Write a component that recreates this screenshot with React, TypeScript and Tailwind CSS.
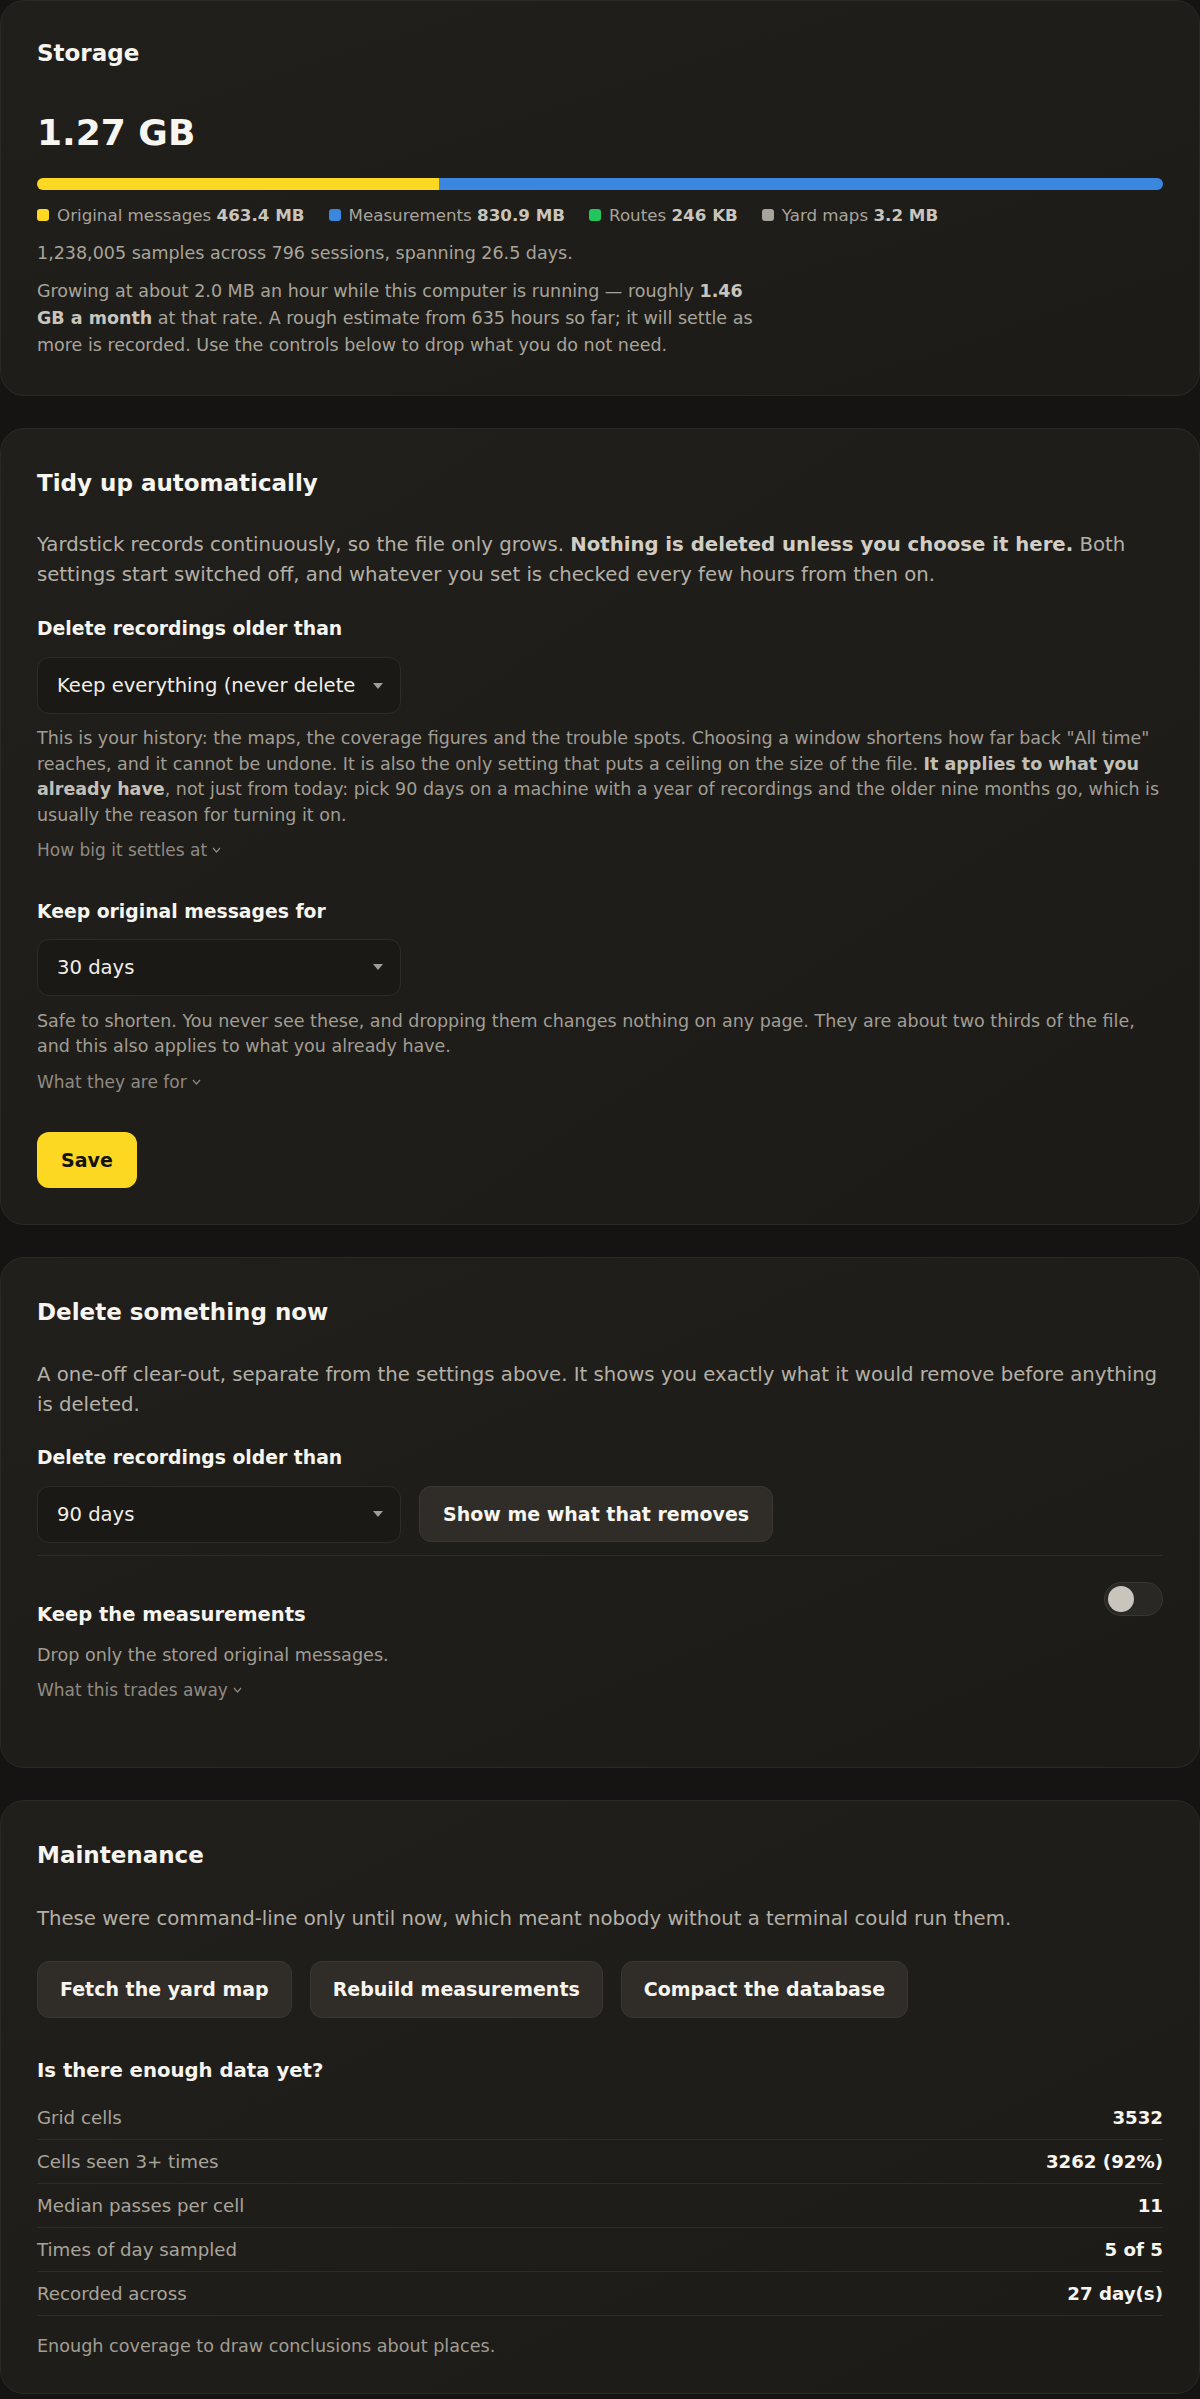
import React from 'react'

const font = { fontFamily: '"DejaVu Sans", Verdana, sans-serif' }

function Chevron() {
  return (
    <svg width="9" height="6" viewBox="0 0 9 6" className="ml-[5px] inline-block" aria-hidden>
      <path d="M1 1l3.5 4L8 1" fill="none" stroke="currentColor" strokeWidth="1.2" />
    </svg>
  )
}

function Select({ value }: { value: string }) {
  return (
    <div className="flex h-[57px] w-[364px] items-center justify-between rounded-xl border border-[#2e2c28] bg-[#1a1916] pl-[19px] pr-[16px]">
      <span className="w-[300px] overflow-hidden whitespace-nowrap text-[19.6px] text-[#f1eee8]">{value}</span>
      <svg width="12" height="8" viewBox="0 0 12 8" className="ml-2 shrink-0">
        <polygon points="1,1 11,1 6,7" fill="#a19d95" />
      </svg>
    </div>
  )
}

function Card({ children }: { children: React.ReactNode }) {
  return (
    <section className="rounded-[24px] border border-[#2b2925] bg-gradient-to-br from-[#211f1b] via-[#1f1d19] to-[#1d1b18] p-9">
      {children}
    </section>
  )
}

function Toggle() {
  return (
    <div className="flex h-[34px] w-[59px] items-center rounded-full border border-[#3a3732] bg-[#2a2824] px-[3px]">
      <div className="h-[26px] w-[26px] rounded-full bg-[#c9c5bc]" />
    </div>
  )
}

const legend = [
  { color: 'bg-[#fdd823]', label: 'Original messages', value: '463.4 MB' },
  { color: 'bg-[#3b86df]', label: 'Measurements', value: '830.9 MB' },
  { color: 'bg-[#22c55e]', label: 'Routes', value: '246 KB' },
  { color: 'bg-[#a8a49c]', label: 'Yard maps', value: '3.2 MB' },
]

const rows = [
  ['Grid cells', '3532'],
  ['Cells seen 3+ times', '3262 (92%)'],
  ['Median passes per cell', '11'],
  ['Times of day sampled', '5 of 5'],
  ['Recorded across', '27 day(s)'],
]

export default function App() {
  return (
    <div style={font} className="min-h-screen bg-[#151412] text-[#f3f1ec]">
      <div className="flex flex-col gap-8">
        {/* storage */}
        <Card>
          <h2 className="text-[23px] font-bold leading-8 text-[#f7f5f0]">Storage</h2>
          <div className="mt-[44px] text-[36px] font-bold leading-[40px] text-[#f7f5f0]">1.27 GB</div>
          <div className="mt-[25px] flex h-3 w-full overflow-hidden rounded-full">
            <div className="h-full bg-[#fdd823]" style={{ width: '35.7%' }} />
            <div className="h-full flex-1 bg-[#3b86df]" />
          </div>
          <div className="mt-[13px] flex flex-wrap gap-x-6 text-[16.7px] leading-6 text-[#a8a49b]">
            {legend.map((l) => (
              <div key={l.label} className="flex items-center gap-2">
                <span className={`h-3 w-3 rounded-[3px] ${l.color}`} />
                <span>
                  {l.label} <b className="font-bold text-[#c9c5bc]">{l.value}</b>
                </span>
              </div>
            ))}
          </div>
          <p className="mt-[13px] text-[17.5px] leading-[26px] text-[#a8a49b]">
            1,238,005 samples across 796 sessions, spanning 26.5 days.
          </p>
          <p className="mt-3 max-w-[728px] text-[17.5px] leading-[27px] text-[#a8a49b]">
            Growing at about 2.0 MB an hour while this computer is running — roughly{' '}
            <b className="font-bold text-[#c9c5bc]">1.46 GB a month</b> at that rate. A rough estimate from 635 hours so
            far; it will settle as more is recorded. Use the controls below to drop what you do not need.
          </p>
        </Card>

        {/* tidy up */}
        <Card>
          <h2 className="text-[23px] font-bold leading-9 text-[#f7f5f0]">Tidy up automatically</h2>
          <p className="mt-[29px] text-[19.7px] leading-[30px] text-[#b4b0a7]">
            Yardstick records continuously, so the file only grows.{' '}
            <b className="font-bold text-[#d2cec5]">Nothing is deleted unless you choose it here.</b> Both settings start
            switched off, and whatever you set is checked every few hours from then on.
          </p>
          <h3 className="mt-[27px] text-[18.8px] font-bold leading-6 text-[#f7f5f0]">Delete recordings older than</h3>
          <div className="mt-4">
            <Select value="Keep everything (never delete)" />
          </div>
          <p className="mt-3 text-[17.5px] leading-[25.7px] text-[#a19d94]">
            This is your history: the maps, the coverage figures and the trouble spots. Choosing a window shortens how far
            back "All time" reaches, and it cannot be undone. It is also the only setting that puts a ceiling on the size
            of the file. <b className="font-bold text-[#c4c0b7]">It applies to what you already have</b>, not just from
            today: pick 90 days on a machine with a year of recordings and the older nine months go, which is usually the
            reason for turning it on.
          </p>
          <div className="mt-[10px] flex items-center text-[17px] leading-[22px] text-[#8f8b83]">
            How big it settles at
            <Chevron />
          </div>
          <h3 className="mt-[39px] text-[18.8px] font-bold leading-6 text-[#f7f5f0]">Keep original messages for</h3>
          <div className="mt-[15px]">
            <Select value="30 days" />
          </div>
          <p className="mt-[13px] text-[17.5px] leading-[25.5px] text-[#a19d94]">
            Safe to shorten. You never see these, and dropping them changes nothing on any page. They are about two
            thirds of the file, and this also applies to what you already have.
          </p>
          <div className="mt-[11px] flex items-center text-[17px] leading-[22px] text-[#8f8b83]">
            What they are for
            <Chevron />
          </div>
          <button className="mt-[39px] h-14 rounded-xl bg-[#fdd823] px-6 text-[19px] font-bold text-[#14130f]">
            Save
          </button>
        </Card>

        {/* delete now */}
        <Card>
          <h2 className="text-[23px] font-bold leading-9 text-[#f7f5f0]">Delete something now</h2>
          <p className="mt-[30px] text-[19.7px] leading-[30px] text-[#b4b0a7]">
            A one-off clear-out, separate from the settings above. It shows you exactly what it would remove before
            anything is deleted.
          </p>
          <h3 className="mt-[26px] text-[18.8px] font-bold leading-6 text-[#f7f5f0]">Delete recordings older than</h3>
          <div className="mt-4 flex items-center gap-[18px]">
            <Select value="90 days" />
            <button className="h-14 rounded-xl border border-[#3a3732] bg-[#302d28] px-[23px] text-[19px] font-bold text-[#f7f5f0]">
              Show me what that removes
            </button>
          </div>
          <div className="mt-3 border-t border-[#2e2c28]" />
          <div className="flex items-start justify-between pb-[30px]">
            <div className="pt-[47px]">
              <h3 className="text-[19.5px] font-bold leading-6 text-[#f7f5f0]">Keep the measurements</h3>
              <p className="mt-4 text-[17.6px] leading-6 text-[#a19d94]">Drop only the stored original messages.</p>
              <div className="mt-3 flex items-center text-[17px] leading-[22px] text-[#8f8b83]">
                What this trades away
                <Chevron />
              </div>
            </div>
            <div className="mt-[26px]">
              <Toggle />
            </div>
          </div>
        </Card>

        {/* maintenance */}
        <Card>
          <h2 className="text-[23px] font-bold leading-9 text-[#f7f5f0]">Maintenance</h2>
          <p className="mt-[31px] text-[19.7px] leading-[30px] text-[#b4b0a7]">
            These were command-line only until now, which meant nobody without a terminal could run them.
          </p>
          <div className="mt-[27px] flex gap-[18px]">
            {['Fetch the yard map', 'Rebuild measurements', 'Compact the database'].map((b) => (
              <button
                key={b}
                className="h-[57px] rounded-xl border border-[#3a3732] bg-[#302d28] px-[22px] text-[19px] font-bold text-[#f7f5f0]"
              >
                {b}
              </button>
            ))}
          </div>
          <h3 className="mt-[41px] text-[19.7px] font-bold leading-6 text-[#f7f5f0]">Is there enough data yet?</h3>
          <div className="mt-[13px]">
            {rows.map(([k, v]) => (
              <div key={k} className="flex h-[44px] items-center justify-between border-b border-[#2e2c28] text-[18.2px]">
                <span className="text-[#a8a49b]">{k}</span>
                <span className="font-bold text-[#f7f5f0]">{v}</span>
              </div>
            ))}
          </div>
          <p className="mt-[19px] text-[17.6px] leading-[22px] text-[#a19d94]">
            Enough coverage to draw conclusions about places.
          </p>
        </Card>
      </div>
    </div>
  )
}
